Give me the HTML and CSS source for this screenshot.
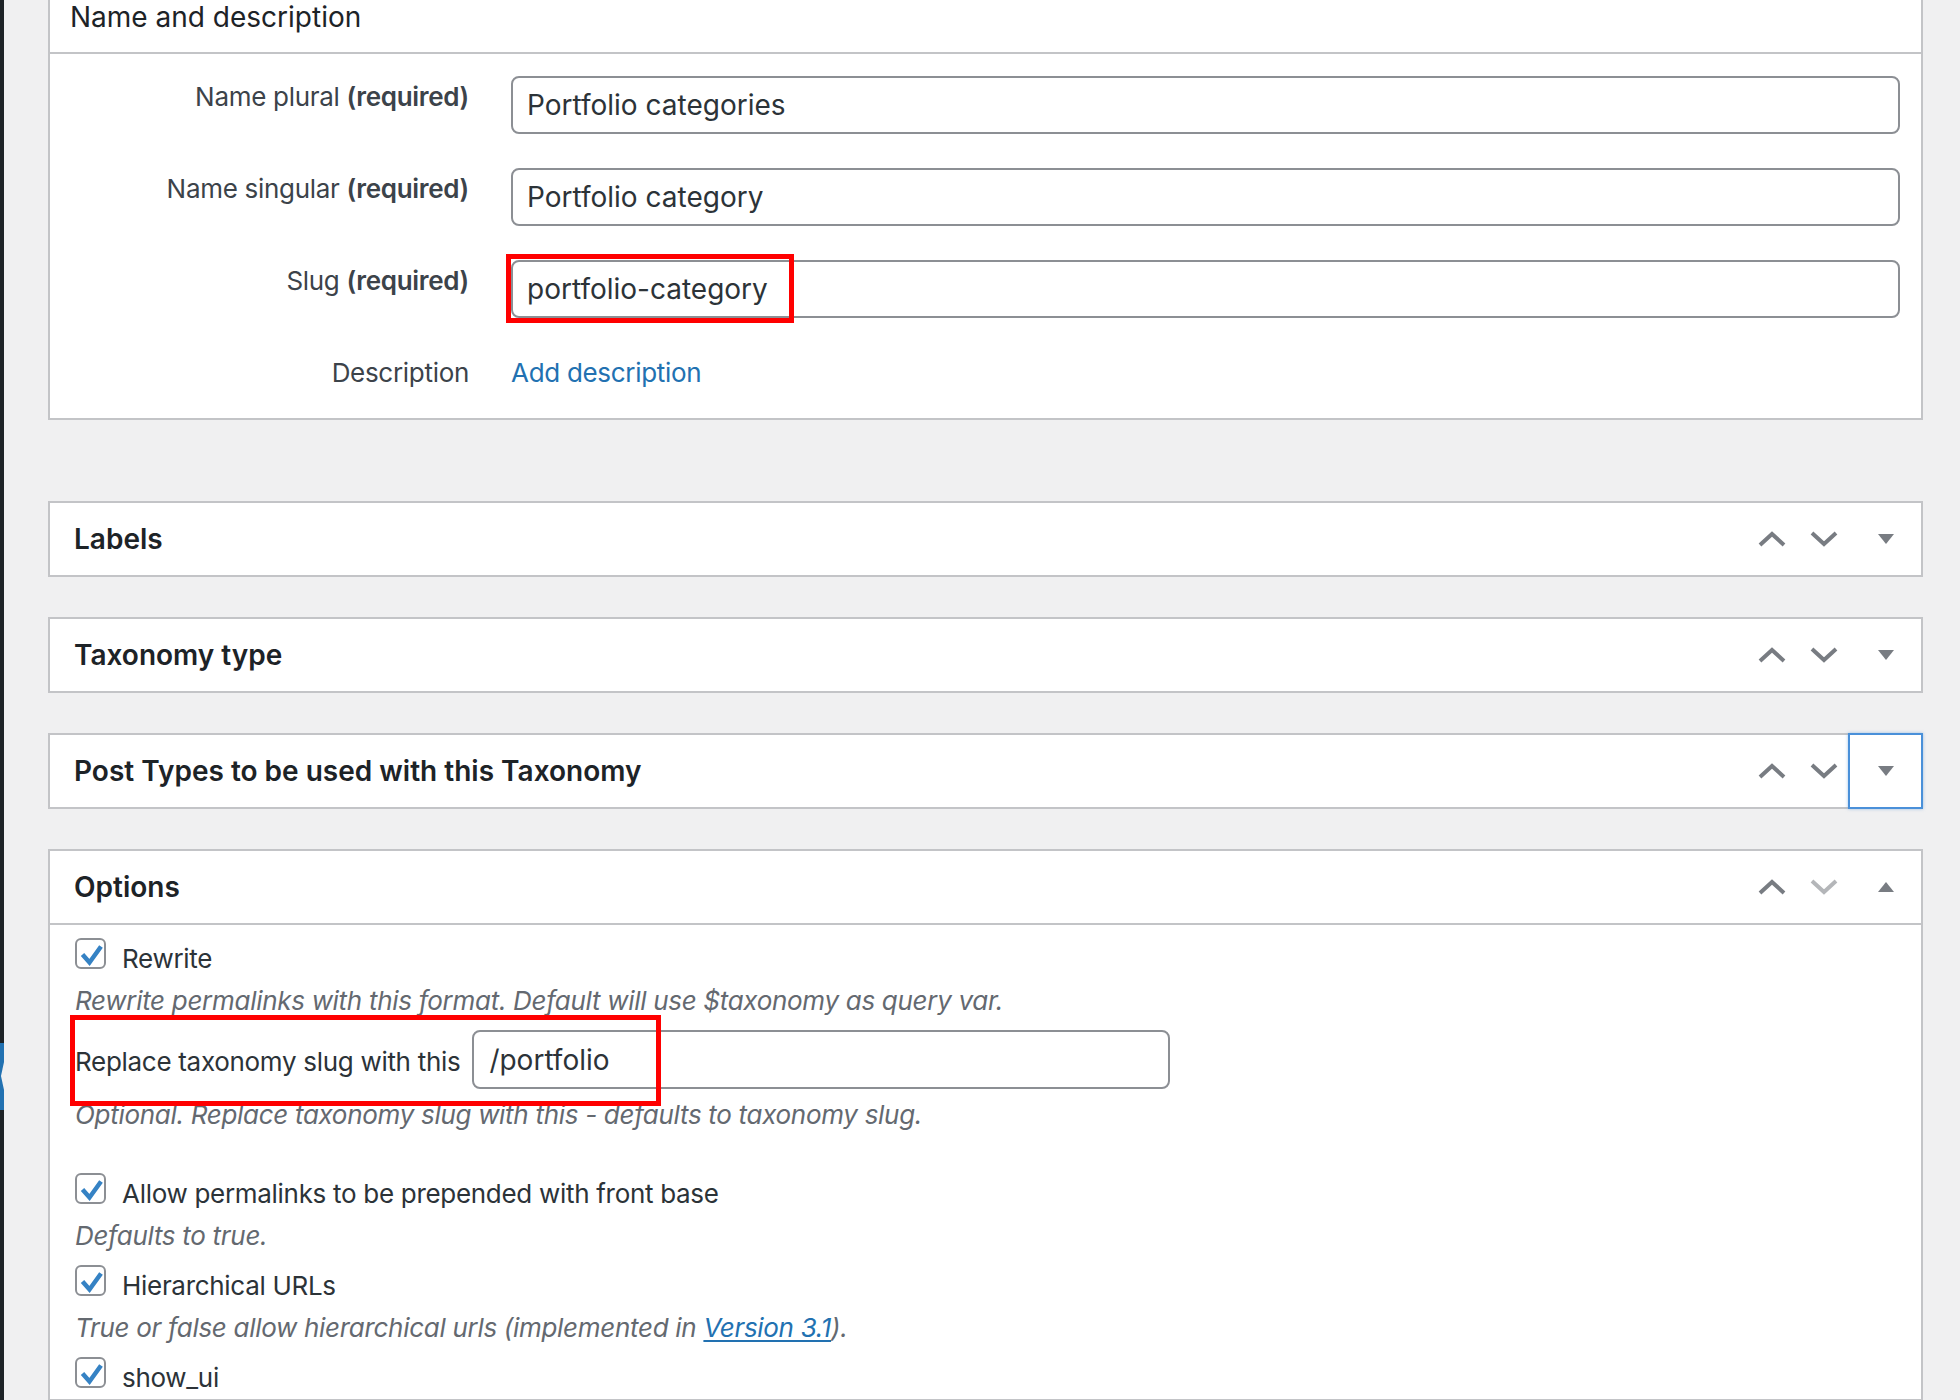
FILE: index.html
```html
<!DOCTYPE html>
<html lang="en">
<head>
    <meta charset="UTF-8">
    <meta name="viewport" content="width=device-width, initial-scale=1.0">
    <title>Edit Taxonomy</title>
    <link rel="stylesheet" href="styles.css">
</head>
<body>
    <div class="adminmenu">
        <span class="menu-current"></span>
    </div>

    <main class="content">
        <!-- Name and description -->
        <section class="postbox postbox-main">
            <h2 class="postbox-title">Name and description</h2>
            <div class="form-table">
                <div class="field-row">
                    <label class="field-label" for="name-plural">Name plural <b>(required)</b></label>
                    <div class="field-control">
                        <input class="text-input" id="name-plural" type="text" value="Portfolio categories">
                    </div>
                </div>
                <div class="field-row">
                    <label class="field-label" for="name-singular">Name singular <b>(required)</b></label>
                    <div class="field-control">
                        <input class="text-input" id="name-singular" type="text" value="Portfolio category">
                    </div>
                </div>
                <div class="field-row">
                    <label class="field-label" for="slug">Slug <b>(required)</b></label>
                    <div class="field-control">
                        <input class="text-input" id="slug" type="text" value="portfolio-category">
                        <span class="highlight highlight-slug"></span>
                    </div>
                </div>
                <div class="field-row">
                    <span class="field-label">Description</span>
                    <div class="field-control">
                        <a class="link add-desc" href="#">Add description</a>
                    </div>
                </div>
            </div>
        </section>

        <section class="postbox">
            <div class="postbox-header">
                <h2 class="hndle">Labels</h2>
                <div class="handle-actions">
                    <button class="handle-order"><svg width="28" height="16" viewBox="0 0 28 16"><polyline points="2,14 14,3 26,14"/></svg></button>
                    <button class="handle-order"><svg width="28" height="16" viewBox="0 0 28 16"><polyline points="2,2 14,13 26,2"/></svg></button>
                    <button class="handlediv"><svg width="16" height="10" viewBox="0 0 16 10"><polygon points="0,0 16,0 8,10"/></svg></button>
                </div>
            </div>
        </section>

        <section class="postbox">
            <div class="postbox-header">
                <h2 class="hndle">Taxonomy type</h2>
                <div class="handle-actions">
                    <button class="handle-order"><svg width="28" height="16" viewBox="0 0 28 16"><polyline points="2,14 14,3 26,14"/></svg></button>
                    <button class="handle-order"><svg width="28" height="16" viewBox="0 0 28 16"><polyline points="2,2 14,13 26,2"/></svg></button>
                    <button class="handlediv"><svg width="16" height="10" viewBox="0 0 16 10"><polygon points="0,0 16,0 8,10"/></svg></button>
                </div>
            </div>
        </section>

        <section class="postbox">
            <div class="postbox-header">
                <h2 class="hndle">Post Types to be used with this Taxonomy</h2>
                <div class="handle-actions">
                    <button class="handle-order"><svg width="28" height="16" viewBox="0 0 28 16"><polyline points="2,14 14,3 26,14"/></svg></button>
                    <button class="handle-order"><svg width="28" height="16" viewBox="0 0 28 16"><polyline points="2,2 14,13 26,2"/></svg></button>
                    <button class="handlediv is-focused"><svg width="16" height="10" viewBox="0 0 16 10"><polygon points="0,0 16,0 8,10"/></svg></button>
                </div>
            </div>
        </section>

        <!-- Options (open) -->
        <section class="postbox">
            <div class="postbox-header open">
                <h2 class="hndle">Options</h2>
                <div class="handle-actions">
                    <button class="handle-order"><svg width="28" height="16" viewBox="0 0 28 16"><polyline points="2,14 14,3 26,14"/></svg></button>
                    <button class="handle-order disabled"><svg width="28" height="16" viewBox="0 0 28 16"><polyline points="2,2 14,13 26,2"/></svg></button>
                    <button class="handlediv"><svg width="16" height="10" viewBox="0 0 16 10"><polygon points="0,10 16,10 8,0"/></svg></button>
                </div>
            </div>
            <div class="inside">
                <label class="check-row">
                    <span class="checkbox"><svg viewBox="0 0 31 31"><polyline points="7.5,16.5 14.5,24.5 26,8.5"/></svg></span>
                    Rewrite
                </label>
                <p class="description">Rewrite permalinks with this format. Default will use $taxonomy as query var.</p>

                <div class="input-row">
                    <label for="rewrite-slug">Replace taxonomy slug with this</label>
                    <input class="text-input slug-input" id="rewrite-slug" type="text" value="/portfolio">
                    <span class="highlight highlight-rewrite"></span>
                </div>
                <p class="description spaced">Optional. Replace taxonomy slug with this - defaults to taxonomy slug.</p>

                <label class="check-row">
                    <span class="checkbox"><svg viewBox="0 0 31 31"><polyline points="7.5,16.5 14.5,24.5 26,8.5"/></svg></span>
                    Allow permalinks to be prepended with front base
                </label>
                <p class="description">Defaults to true.</p>

                <label class="check-row">
                    <span class="checkbox"><svg viewBox="0 0 31 31"><polyline points="7.5,16.5 14.5,24.5 26,8.5"/></svg></span>
                    Hierarchical URLs
                </label>
                <p class="description">True or false allow hierarchical urls (implemented in <a class="link underline" href="#">Version 3.1</a>).</p>

                <label class="check-row">
                    <span class="checkbox"><svg viewBox="0 0 31 31"><polyline points="7.5,16.5 14.5,24.5 26,8.5"/></svg></span>
                    show_ui
                </label>
            </div>
        </section>
    </main>
</body>
</html>
```

FILE: styles.css
```css
* {
    box-sizing: border-box;
}
html, body {
    margin: 0;
}
body {
    display: flex;
    height: 1400px;
    overflow: hidden;
    background: #f0f0f1;
    font-family: Inter, "Noto Sans", sans-serif;
    font-size: 26px;
    letter-spacing: -0.3px;
    color: #3c434a;
}

/* admin menu edge */
.adminmenu {
    flex: none;
    width: 4px;
    background: #1d2327;
    padding-top: 1043px;
}
.menu-current {
    position: relative;
    display: block;
    height: 67px;
    background: #2271b1;
}
.menu-current::after {
    content: "";
    position: absolute;
    right: 0;
    top: 19px;
    border-top: 14px solid transparent;
    border-bottom: 14px solid transparent;
    border-right: 3px solid #f0f0f1;
}

.content {
    flex: 1;
    margin: 0 37px 0 44px;
}

/* boxes */
.postbox {
    background: #fff;
    border: 2px solid #c3c4c7;
    margin-bottom: 40px;
}
.postbox-main {
    margin-top: -22px;
    margin-bottom: 81px;
}
.postbox-title {
    margin: 0;
    height: 74px;
    padding: 0 20px;
    border-bottom: 2px solid #c3c4c7;
    font-size: 28px;
    font-weight: 400;
    letter-spacing: 0;
    line-height: 74px;
    color: #1d2327;
}
.postbox-header {
    display: flex;
    align-items: center;
    height: 72px;
}
.postbox-header.open {
    height: 74px;
    border-bottom: 2px solid #c3c4c7;
}
.hndle {
    flex: 1;
    margin: 0;
    padding-left: 24px;
    font-size: 28px;
    font-weight: 600;
    letter-spacing: 0;
    color: #1d2327;
}
.handle-actions {
    display: flex;
    align-self: stretch;
}
.handle-actions button {
    display: flex;
    align-items: center;
    justify-content: center;
    padding: 0;
    border: none;
    background: none;
    height: 72px;
}
.handle-order {
    width: 52px;
}
.handle-order polyline {
    fill: none;
    stroke: #787c82;
    stroke-width: 4;
}
.handle-order.disabled polyline {
    stroke: #b4b6b9;
}
.handlediv {
    width: 71px;
}
.handlediv polygon {
    fill: #787c82;
}
.handlediv.is-focused {
    box-shadow: 0 0 0 2px #4a90d9, 0 0 3px 2px rgba(74, 144, 217, 0.5);
}

/* name + description rows */
.form-table {
    padding: 5px 21px 7px 0;
}
.field-row {
    display: flex;
    align-items: flex-start;
    gap: 42px;
    padding: 17px 0;
}
.field-label {
    flex: none;
    width: 419px;
    text-align: right;
    line-height: 42px;
    color: #3c434a;
}
.field-label b {
    font-weight: 600;
}
.field-control {
    flex: 1;
    position: relative;
    line-height: 42px;
}
.text-input {
    display: block;
    width: 100%;
    height: 58px;
    padding: 0 14px;
    border: 2px solid #8c8f94;
    border-radius: 8px;
    background: #fff;
    font: inherit;
    font-size: 28px;
    letter-spacing: 0;
    color: #2c3338;
    outline: none;
}
.link {
    color: #2271b1;
    text-decoration: none;
}
.link.underline {
    text-decoration: underline;
    text-underline-offset: 3px;
}

/* red marker boxes */
.highlight {
    position: absolute;
    border: 5px solid #ff0000;
    pointer-events: none;
    z-index: 2;
}
.highlight-slug {
    left: -5px;
    top: -6px;
    width: 288px;
    height: 69px;
}
.highlight-rewrite {
    left: -5px;
    top: -15px;
    width: 591px;
    height: 91px;
}

/* options */
.inside {
    padding: 13px 25px 0;
}
.check-row {
    display: flex;
    align-items: flex-start;
    gap: 16px;
    height: 42px;
    line-height: 42px;
    color: #2c3338;
}
.checkbox {
    flex: none;
    position: relative;
    width: 31px;
    height: 31px;
    border: 2px solid #8c8f94;
    border-radius: 6px;
    background: #fff;
}
.checkbox svg {
    position: absolute;
    left: -2px;
    top: -2px;
    width: 31px;
    height: 31px;
}
.checkbox polyline {
    fill: none;
    stroke: #3582c4;
    stroke-width: 4.5;
}
.description {
    margin: 0 0 8px;
    line-height: 42px;
    font-style: italic;
    color: #646970;
}
.description.spaced {
    margin-bottom: 37px;
}
.input-row {
    position: relative;
    display: flex;
    align-items: flex-start;
    gap: 12px;
    height: 64px;
    color: #2c3338;
}
.input-row label {
    line-height: 64px;
}
.slug-input {
    width: 698px;
    height: 59px;
    padding: 0 15px;
}
```
